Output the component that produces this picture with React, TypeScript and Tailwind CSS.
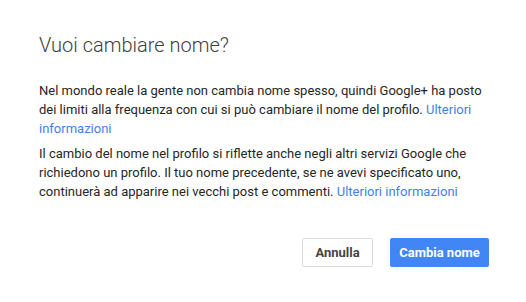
export default function App() {
  return (
    <main className="h-[302px] w-[526px] bg-white font-['Roboto',sans-serif]">
      <div className="pl-[39px] pr-[37px] pt-[31px]">
        <h1 className="text-[20px] font-light leading-[28px] text-[#404040]">Vuoi cambiare nome?</h1>

        <div className="mt-[22px] text-[13px] leading-[19px] text-[#262626]">
          <p>
            Nel mondo reale la gente non cambia nome spesso, quindi Google+ ha posto dei limiti alla frequenza con
            cui si può cambiare il nome del profilo.{" "}
            <a href="#" className="text-[#427fed]">
              Ulteriori informazioni
            </a>
          </p>
          <p className="mt-[6px]">
            Il cambio del nome nel profilo si riflette anche negli altri servizi Google che richiedono un profilo. Il
            tuo nome precedente, se ne avevi specificato uno, continuerà ad apparire nei vecchi post e commenti.{" "}
            <a href="#" className="text-[#427fed]">
              Ulteriori informazioni
            </a>
          </p>
        </div>

        <div className="mt-[37px] flex justify-end gap-[17px]">
          <button className="h-[29px] w-[71px] rounded-[2px] border border-[#dcdcdc] bg-white text-[13px] font-bold text-[#444]">
            Annulla
          </button>
          <button className="h-[29px] w-[99px] rounded-[2px] bg-[#4285f4] text-[13px] font-bold text-white">
            Cambia nome
          </button>
        </div>
      </div>
    </main>
  )
}
